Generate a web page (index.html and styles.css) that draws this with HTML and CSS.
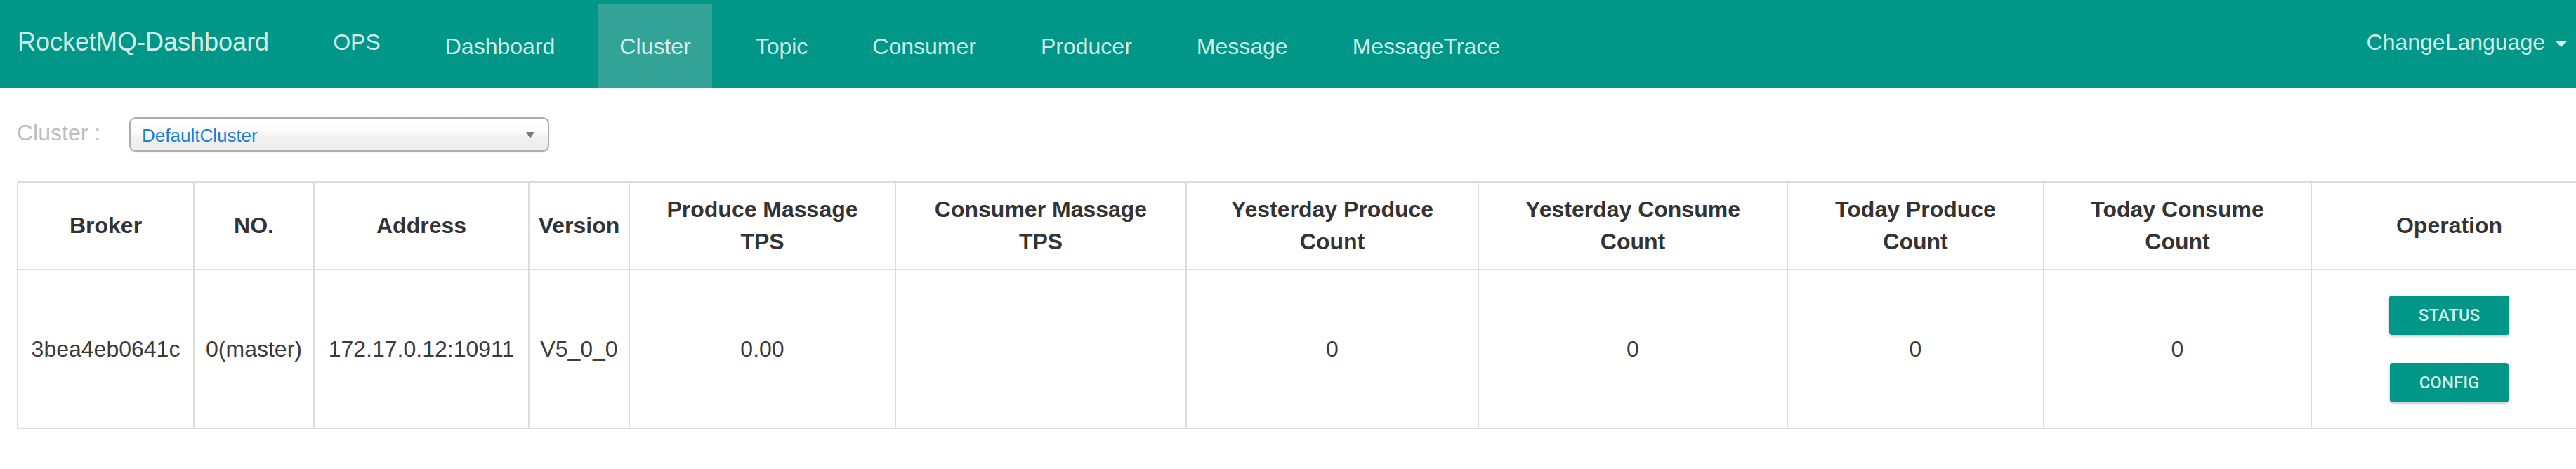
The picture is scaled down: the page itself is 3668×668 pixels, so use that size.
FILE: index.html
```html
<!DOCTYPE html>
<html lang="en">
<head>
<meta charset="utf-8">
<title>RocketMQ-Dashboard</title>
<link rel="stylesheet" href="styles.css">
</head>
<body>
<nav class="navbar">
  <a class="brand">RocketMQ-Dashboard</a>
  <a class="nav-ops">OPS</a>
  <ul class="nav-links">
    <li><a>Dashboard</a></li>
    <li class="active"><a>Cluster</a></li>
    <li><a>Topic</a></li>
    <li><a>Consumer</a></li>
    <li><a>Producer</a></li>
    <li><a>Message</a></li>
    <li><a>MessageTrace</a></li>
  </ul>
  <div class="lang"><span>ChangeLanguage</span><span class="caret"></span></div>
</nav>
<main class="content">
  <div class="filter">
    <label class="filter-label">Cluster :</label>
    <div class="select-box">
      <span class="select-text">DefaultCluster</span>
      <svg class="select-arrow" width="12" height="9" viewBox="0 0 12 9"><polygon points="0,0 12,0 6,9" fill="#7a7a7a"/></svg>
    </div>
  </div>
  <table class="cluster-table">
    <colgroup>
      <col class="c-broker"><col class="c-no"><col class="c-addr"><col class="c-ver"><col class="c-ptps"><col class="c-ctps"><col class="c-ypc"><col class="c-ycc"><col class="c-tpc"><col class="c-tcc"><col class="c-op">
    </colgroup>
    <thead>
      <tr>
        <th>Broker</th>
        <th>NO.</th>
        <th>Address</th>
        <th>Version</th>
        <th>Produce Massage<br>TPS</th>
        <th>Consumer Massage<br>TPS</th>
        <th>Yesterday Produce<br>Count</th>
        <th>Yesterday Consume<br>Count</th>
        <th>Today Produce<br>Count</th>
        <th>Today Consume<br>Count</th>
        <th>Operation</th>
      </tr>
    </thead>
    <tbody>
      <tr>
        <td>3bea4eb0641c</td>
        <td>0(master)</td>
        <td>172.17.0.12:10911</td>
        <td>V5_0_0</td>
        <td>0.00</td>
        <td></td>
        <td>0</td>
        <td>0</td>
        <td>0</td>
        <td>0</td>
        <td class="op-cell">
          <div class="op-buttons">
            <button class="btn">STATUS</button>
            <button class="btn">CONFIG</button>
          </div>
        </td>
      </tr>
    </tbody>
  </table>
</main>
</body>
</html>
```
FILE: styles.css
```css
html, body {
  margin: 0;
  padding: 0;
  background: #fff;
  overflow: hidden;
}

body {
  font-family: "Liberation Sans", Arial, Helvetica, sans-serif;
  color: #333;
}

.navbar {
  display: flex;
  align-items: flex-start;
  height: 126px;
  background: #009688;
  padding-left: 25px;
  color: rgba(255, 255, 255, 0.84);
  box-sizing: border-box;
}

.brand {
  font-size: 36px;
  height: 120px;
  line-height: 120px;
  margin-right: 61px;
  white-space: nowrap;
}

.nav-ops {
  font-size: 32px;
  height: 120px;
  line-height: 120px;
  padding: 0 30px;
}

.nav-links {
  display: flex;
  gap: 32px;
  list-style: none;
  margin: 6px 0 0 32px;
  padding: 0;
}

.nav-links a {
  display: block;
  font-size: 32px;
  height: 120px;
  line-height: 120px;
  padding: 0 30px;
  white-space: nowrap;
}

.nav-links .active a {
  background: #33a398;
}

.lang {
  margin-left: auto;
  display: flex;
  align-items: center;
  font-size: 32px;
  height: 120px;
  line-height: 120px;
  padding-right: 13px;
}

.caret {
  width: 0;
  height: 0;
  border-top: 8px solid rgba(255, 255, 255, 0.84);
  border-left: 8px solid transparent;
  border-right: 8px solid transparent;
  margin-left: 15px;
  margin-top: 6px;
}

.content {
  padding-left: 24px;
}

.filter {
  display: flex;
  align-items: flex-start;
  margin-top: 41px;
  height: 49px;
}

.filter-label {
  width: 160px;
  font-size: 32px;
  line-height: 44px;
  color: #bdbdbd;
  white-space: nowrap;
}

.select-box {
  display: flex;
  align-items: center;
  width: 598px;
  height: 49px;
  box-sizing: border-box;
  border: 2px solid #acacac;
  border-radius: 9px;
  background: linear-gradient(#ffffff 0%, #fdfdfd 40%, #f1f1f1 58%, #ededed 100%);
  box-shadow: 0 1px 2px rgba(0, 0, 0, 0.15);
  padding: 0 19px 0 16px;
}

.select-text {
  font-size: 26px;
  color: #1a7fd6;
  padding-top: 3px;
}

.select-arrow {
  margin-left: auto;
  margin-top: 2px;
}

.cluster-table {
  margin-top: 42px;
  border-collapse: collapse;
  table-layout: fixed;
  width: 3661px;
  border: 2px solid #ddd;
}

.c-broker { width: 251px; }
.c-no { width: 171px; }
.c-addr { width: 306px; }
.c-ver { width: 143px; }
.c-ptps { width: 379px; }
.c-ctps { width: 414px; }
.c-ypc { width: 416px; }
.c-ycc { width: 440px; }
.c-tpc { width: 365px; }
.c-tcc { width: 381px; }
.c-op { width: 393px; }

.cluster-table th,
.cluster-table td {
  border: 2px solid #ddd;
  padding: 16px 10px;
  text-align: center;
  vertical-align: middle;
  font-size: 32px;
  line-height: 1.42857;
  color: #333;
  white-space: nowrap;
}

.cluster-table th {
  font-weight: 700;
}

.cluster-table td {
  font-weight: 400;
  color: #3a3a3a;
}

.op-buttons {
  display: flex;
  flex-direction: column;
  align-items: center;
  gap: 40px;
  padding: 20px 0;
}

.btn {
  display: block;
  height: 56px;
  padding: 0 42px;
  border: none;
  border-radius: 4px;
  background: #009688;
  color: rgba(255, 255, 255, 0.84);
  font-family: Roboto, "Liberation Sans", Arial, sans-serif;
  font-size: 24px;
  font-weight: 500;
  line-height: 56px;
  box-shadow: 0 2px 4px rgba(0, 0, 0, 0.24);
  cursor: pointer;
}
```
